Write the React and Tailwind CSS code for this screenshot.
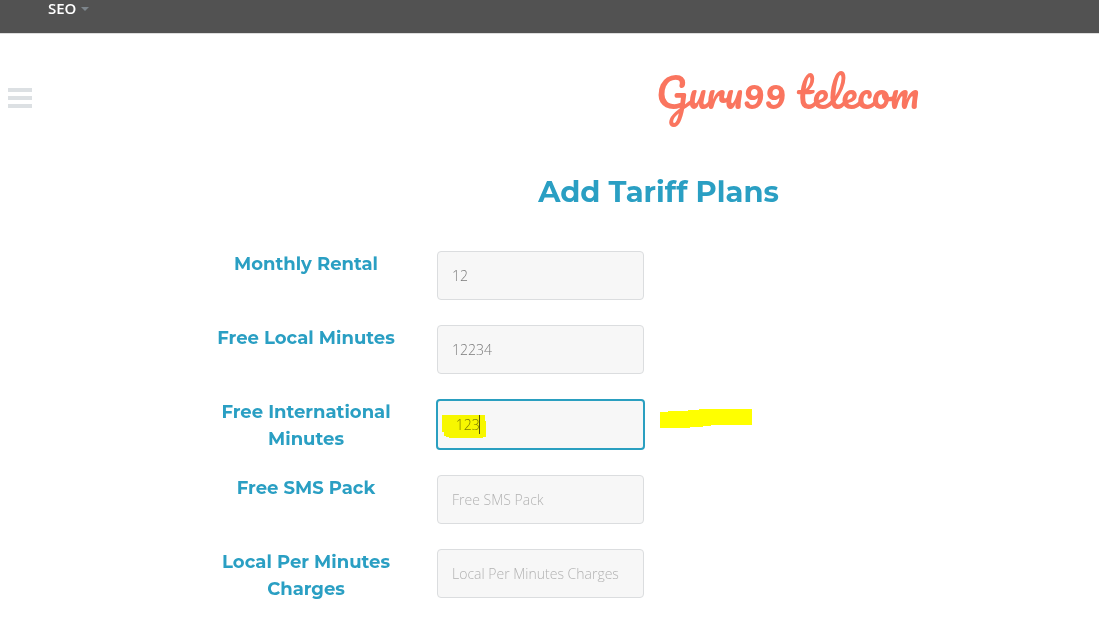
import { useState } from "react";

const FIELDS = [
  { id: "rental", label: "Monthly Rental", value: "12" },
  { id: "local_minutes", label: "Free Local Minutes", value: "12234" },
  { id: "inter_minutes", label: "Free International Minutes", value: " 123", active: true },
  { id: "sms_pack", label: "Free SMS Pack", value: "" },
  { id: "minutes_charges", label: "Local Per Minutes Charges", value: "" },
];

function Field({ id, label, value, active }) {
  const [text, setText] = useState(value);
  const frame = active
    ? "-mx-px h-[51px] w-[calc(100%+2px)] border-2 border-[#2a9fc0]"
    : "h-[49px] w-full border border-[#dbdddf]";
  return (
    <>
      <label
        htmlFor={id}
        className="h-12 text-center font-['Montserrat','Inter',sans-serif] text-lg leading-[27px] font-bold text-[#2a9fc3]"
      >
        {label}
      </label>
      <div className="relative">
        <input
          id={id}
          type="text"
          value={text}
          placeholder={label}
          onChange={(e) => setText(e.target.value)}
          className={`block rounded-[4px] bg-[#f7f7f7] px-3.5 text-sm font-light text-[#7b7b7b] outline-none placeholder:text-[#b2b2b2] placeholder:opacity-100 ${frame}`}
        />
        {active && (
          <>
            <svg
              className="pointer-events-none absolute top-4 left-[5px] mix-blend-multiply"
              width="44"
              height="23"
              viewBox="0 0 44 23"
              shapeRendering="crispEdges"
              aria-hidden="true"
            >
              <path d="M0 0H43V6H44V22H41V23H7V22H4V21H2V17H0Z" fill="#ffff00" />
            </svg>
            <span className="pointer-events-none absolute top-4 left-[42px] h-[19px] w-px bg-[#55550a]" />
            <svg
              className="pointer-events-none absolute top-2.5 left-full ml-4"
              width="92"
              height="19"
              viewBox="0 0 92 19"
              shapeRendering="crispEdges"
              aria-hidden="true"
            >
              <path d="M0 3H8V2H28V1H39V0H92V16H51V17H43V18H30V19H0Z" fill="#ffff00" />
            </svg>
          </>
        )}
      </div>
    </>
  );
}

export default function App() {
  return (
    <div className="min-h-screen bg-white font-['Open_Sans',sans-serif]">
      <nav className="h-[34px] border-b border-[#dddddd] bg-[#525252] pl-12">
        <button
          type="button"
          className="flex items-center gap-[5px] text-[15px] leading-4 font-semibold text-white"
        >
          SEO
          <svg width="8" height="4" viewBox="0 0 8 4" className="mt-px" aria-hidden="true">
            <path d="M0 0H8L4 4Z" fill="#7d858c" />
          </svg>
        </button>
      </nav>

      <header className="flex h-32 items-center">
        <button type="button" aria-label="Menu" className="ml-2 h-5 w-6 shrink-0">
          <svg width="24" height="20" viewBox="0 0 24 20" shapeRendering="crispEdges" className="block" aria-hidden="true">
            <path d="M0 0H24V4H0ZM0 8H24V12H0ZM0 16H24V20H0Z" fill="#dce0e3" />
          </svg>
        </button>
        <div className="flex-1 pb-3 pl-[444px] text-center">
          <a
            href="#home"
            className="font-['Pacifico','Lato',cursive] text-[40px] leading-[60px] whitespace-nowrap text-[#fa755f]"
          >
            Guru99 telecom
          </a>
        </div>
      </header>

      <main className="pl-[218px]">
        <h1 className="pt-1.5 text-center font-['Montserrat','Inter',sans-serif] text-[29px] leading-12 font-bold text-[#2a9fc3]">
          Add Tariff Plans
        </h1>
        <form className="mt-[35px] -ml-1.5 grid grid-cols-[21.2%_23.3%] items-start gap-x-[37px] gap-y-[25px]">
          {FIELDS.map((field) => (
            <Field key={field.id} {...field} />
          ))}
        </form>
      </main>
    </div>
  );
}
